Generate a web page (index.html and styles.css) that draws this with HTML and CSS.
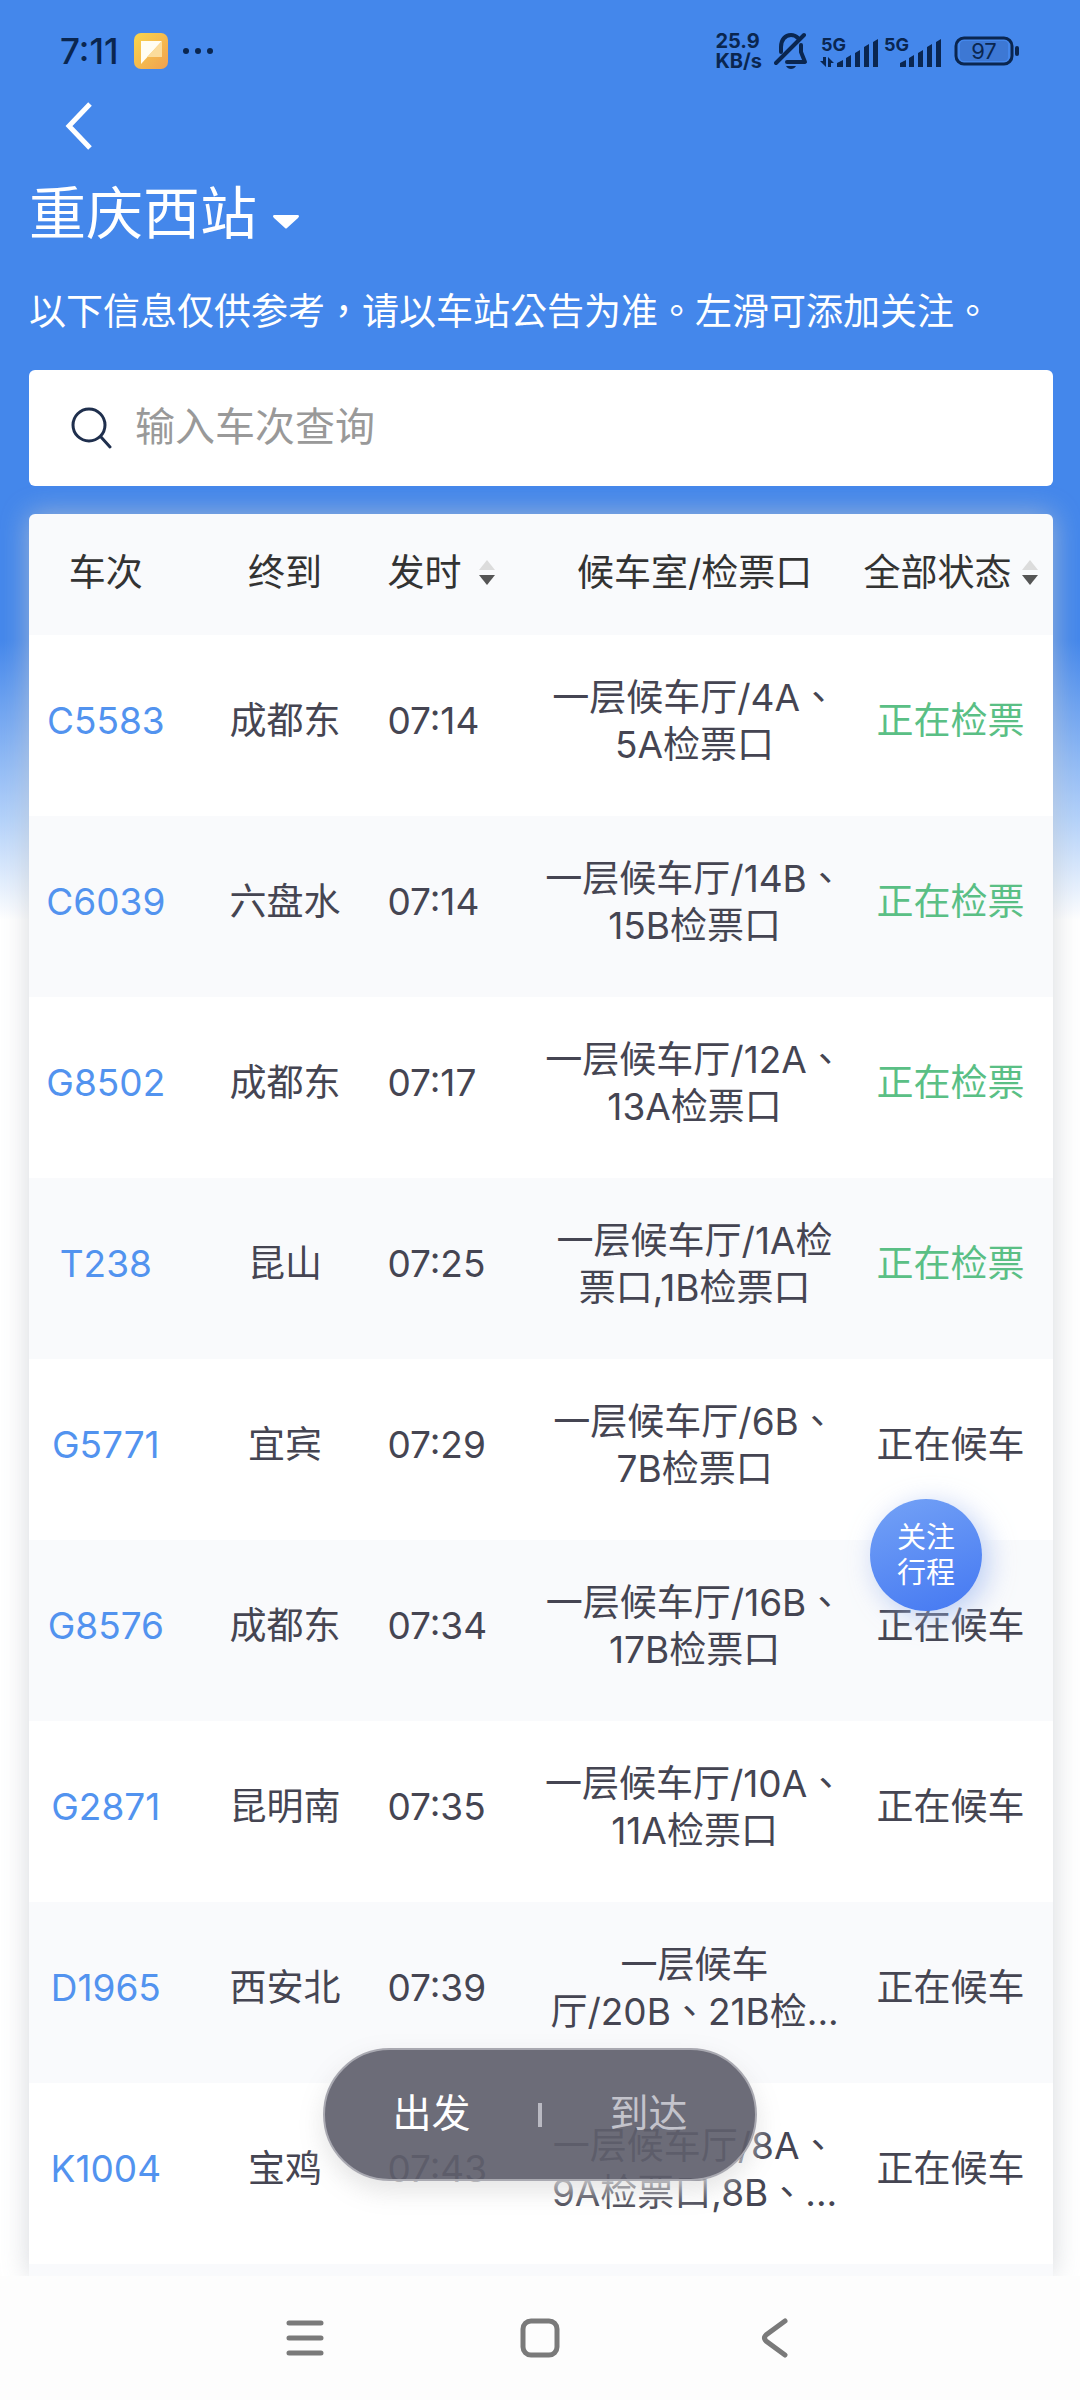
FILE: index.html
```html
<!DOCTYPE html>
<html lang="zh-CN">
<head>
    <meta charset="UTF-8">
    <meta name="viewport" content="width=device-width, initial-scale=1.0">
    <title>重庆西站</title>
    <link rel="stylesheet" href="styles.css">
</head>
<body>
    <div class="screen">
        <div class="status-bar">
            <span class="clock">7:11</span>
            <svg class="app-icon" width="34" height="36" viewBox="0 0 34 36">
                <defs>
                    <linearGradient id="appBg" x1="0" y1="0" x2="1" y2="1">
                        <stop offset="0" stop-color="#f9d64c"/>
                        <stop offset="1" stop-color="#f0a050"/>
                    </linearGradient>
                </defs>
                <rect width="34" height="36" rx="7" fill="url(#appBg)"/>
                <path d="M7 8h21L7 31z" fill="#fffdf2"/>
                <path d="M28 8v16H13z" fill="#fbdc9b"/>
            </svg>
            <svg class="more-icon" width="32" height="8" viewBox="0 0 32 8" fill="#0a2650">
                <circle cx="4" cy="4" r="3"/>
                <circle cx="16" cy="4" r="3"/>
                <circle cx="28" cy="4" r="3"/>
            </svg>
            <div class="status-right">
                <span class="net-speed">25.9<br>KB/s</span>
                <svg width="34" height="38" viewBox="0 0 34 38" fill="none" stroke="#0a2650" stroke-width="4" stroke-linecap="round" stroke-linejoin="round">
                    <path d="M2 31L30 3"/>
                    <path d="M7 20v-5C7 8 11 3 17 3c3 0 5 1 7 3"/>
                    <path d="M27 13v7l4 10H13"/>
                    <path d="M12 34h10c-1 2-3 3-5 3s-4-1-5-3z" fill="#0a2650" stroke="none"/>
                </svg>
                <svg class="signal" width="122" height="44" viewBox="0 -4 122 44" fill="#0a2650">
                    <text x="1" y="18" class="signal-text">5G</text>
                    <path d="M0 28h3v-4h3v10zM8 34V24l6 6h-3v4z"/>
                    <path d="M17 34v-4l6-3v7zM26 34V25l5-3v12zM35 34V20l5-3v17zM44 34V14l5-3v23zM53 34V9l5-3v28z"/>
                    <text x="64" y="18" class="signal-text">5G</text>
                    <path d="M80 34v-4l6-3v7zM89 34V25l5-3v12zM98 34V20l5-3v17zM107 34V14l5-3v23zM116 34V9l5-3v28z"/>
                </svg>
                <svg class="battery" width="66" height="30" viewBox="0 0 66 30">
                    <rect x="2" y="2" width="56" height="26" rx="8" fill="none" stroke="#0a2650" stroke-width="3"/>
                    <rect x="6" y="5" width="48" height="20" rx="4" fill="#3d78d4"/>
                    <rect x="61" y="10" width="4" height="10" rx="2" fill="#0a2650"/>
                    <text x="30" y="23" text-anchor="middle" class="battery-text">97</text>
                </svg>
            </div>
        </div>

        <header class="page-head">
            <button class="back-btn" aria-label="返回">
                <svg width="28" height="48" viewBox="0 0 28 48" fill="none" stroke="#fff" stroke-width="5">
                    <path d="M25 2L4 24l21 22"/>
                </svg>
            </button>
            <button class="station-btn">
                重庆西站
                <svg width="26" height="14" viewBox="0 0 26 14" fill="#fff">
                    <path d="M1 0h24q2 1 0 3L14 13q-1 1-2 0L1 3Q-1 1 1 0z"/>
                </svg>
            </button>
            <p class="notice" lang="zh-TW">以下信息仅供参考，请以车站公告为准。左滑可添加关注。</p>
            <label class="search-box">
                <svg width="42" height="42" viewBox="0 0 42 42" fill="none" stroke="#1f2f4d" stroke-width="3" stroke-linecap="round">
                    <circle cx="18" cy="18" r="16"/>
                    <path d="M30 30l9 10"/>
                </svg>
                <input type="text" placeholder="输入车次查询" aria-label="输入车次查询">
            </label>
        </header>

        <main class="board">
            <table class="train-table">
                <thead>
                    <tr>
                        <th class="col-train">车次</th>
                        <th class="col-dest">终到</th>
                        <th class="col-time">
                            <button class="sort-btn sort-time">发时
                                <svg width="16" height="26" viewBox="0 0 16 26"><path d="M8 0l8 10H0z" fill="#dcdcdc"/><path d="M0 15h16L8 25z" fill="#555"/></svg>
                            </button>
                        </th>
                        <th class="col-hall">候车室/检票口</th>
                        <th class="col-state">
                            <button class="sort-btn">全部状态
                                <svg width="16" height="26" viewBox="0 0 16 26"><path d="M8 0l8 10H0z" fill="#dcdcdc"/><path d="M0 15h16L8 25z" fill="#555"/></svg>
                            </button>
                        </th>
                    </tr>
                </thead>
                <tbody>
                    <tr>
                        <td><a href="#">C5583</a></td>
                        <td>成都东</td>
                        <td class="time">07:14</td>
                        <td class="hall">一层候车厅/4A、<br>5A检票口</td>
                        <td class="checking">正在检票</td>
                    </tr>
                    <tr>
                        <td><a href="#">C6039</a></td>
                        <td>六盘水</td>
                        <td class="time">07:14</td>
                        <td class="hall">一层候车厅/14B、<br>15B检票口</td>
                        <td class="checking">正在检票</td>
                    </tr>
                    <tr>
                        <td><a href="#">G8502</a></td>
                        <td>成都东</td>
                        <td class="time">07:17</td>
                        <td class="hall">一层候车厅/12A、<br>13A检票口</td>
                        <td class="checking">正在检票</td>
                    </tr>
                    <tr>
                        <td><a href="#">T238</a></td>
                        <td>昆山</td>
                        <td class="time">07:25</td>
                        <td class="hall">一层候车厅/1A检<br>票口,1B检票口</td>
                        <td class="checking">正在检票</td>
                    </tr>
                    <tr>
                        <td><a href="#">G5771</a></td>
                        <td>宜宾</td>
                        <td class="time">07:29</td>
                        <td class="hall">一层候车厅/6B、<br>7B检票口</td>
                        <td>正在候车</td>
                    </tr>
                    <tr>
                        <td><a href="#">G8576</a></td>
                        <td>成都东</td>
                        <td class="time">07:34</td>
                        <td class="hall">一层候车厅/16B、<br>17B检票口</td>
                        <td>正在候车</td>
                    </tr>
                    <tr>
                        <td><a href="#">G2871</a></td>
                        <td>昆明南</td>
                        <td class="time">07:35</td>
                        <td class="hall">一层候车厅/10A、<br>11A检票口</td>
                        <td>正在候车</td>
                    </tr>
                    <tr>
                        <td><a href="#">D1965</a></td>
                        <td>西安北</td>
                        <td class="time">07:39</td>
                        <td class="hall">一层候车<br>厅/20B、21B检...</td>
                        <td>正在候车</td>
                    </tr>
                    <tr>
                        <td><a href="#">K1004</a></td>
                        <td>宝鸡</td>
                        <td class="time">07:43</td>
                        <td class="hall">一层候车厅/8A、<br>9A检票口,8B、...</td>
                        <td>正在候车</td>
                    </tr>
                </tbody>
            </table>
        </main>

        <button class="follow-btn">关注<br>行程</button>

        <div class="switch">
            <button class="switch-item active">出发</button>
            <span class="switch-line"></span>
            <button class="switch-item">到达</button>
        </div>

        <nav class="nav-bar">
            <button aria-label="菜单">
                <svg width="40" height="40" viewBox="0 0 40 40" stroke="#7a7a7a" stroke-width="5" stroke-linecap="round">
                    <path d="M4 5h32M4 20h32M4 35h32"/>
                </svg>
            </button>
            <button aria-label="主页">
                <svg width="40" height="40" viewBox="0 0 40 40" fill="none" stroke="#7a7a7a" stroke-width="5">
                    <rect x="3" y="3" width="34" height="34" rx="8"/>
                </svg>
            </button>
            <button aria-label="后退">
                <svg width="40" height="40" viewBox="0 0 40 40" fill="none" stroke="#7a7a7a" stroke-width="5" stroke-linecap="round">
                    <path d="M30 3L11 17q-3 3 0 6l19 14" />
                </svg>
            </button>
        </nav>
    </div>
</body>
</html>
```
FILE: styles.css
```css
* {
    box-sizing: border-box;
}

body {
    margin: 0;
    font-family: Inter, "Noto Sans CJK SC", sans-serif;
    font-size: 37px;
    color: #454552;
}

button {
    border: none;
    background: none;
    padding: 0;
    font: inherit;
    color: inherit;
}

svg {
    display: block;
    flex: none;
}

.screen {
    position: relative;
    display: flex;
    flex-direction: column;
    height: 100vh;
    overflow: hidden;
    background: linear-gradient(#4487eb 640px, #b4d2fa 820px, #fff 920px);
}

/* phone status bar */
.status-bar {
    display: flex;
    align-items: center;
    height: 102px;
    padding: 0 60px;
    color: #0a2650;
}

.clock {
    font-size: 35px;
    font-weight: 500;
}

.app-icon {
    margin-left: 16px;
}

.more-icon {
    margin-left: 14px;
}

.status-right {
    display: flex;
    align-items: center;
    margin-left: auto;
    gap: 12px;
}

.net-speed {
    font-size: 20px;
    font-weight: 700;
    line-height: 20px;
}

.signal-text {
    font-size: 18px;
    font-weight: 700;
}

.battery-text {
    font-size: 22px;
    fill: #0a2650;
}

/* header */
.page-head {
    padding: 0 27px 0 29px;
    color: #fff;
}

.back-btn {
    display: block;
    margin-left: 36px;
}

.station-btn {
    display: flex;
    align-items: center;
    gap: 16px;
    margin-top: 28px;
    font-size: 57px;
    line-height: 72px;
}

.station-btn svg {
    margin-top: 16px;
}

.notice {
    margin: 32px 0 34px;
    font-family: "Noto Sans CJK TC", sans-serif;
    line-height: 54px;
    white-space: nowrap;
}

.search-box {
    display: flex;
    align-items: center;
    gap: 22px;
    height: 116px;
    padding: 0 42px;
    background: #fff;
    border-radius: 6px;
}

.search-box input {
    flex: 1;
    min-width: 0;
    padding: 0 0 4px;
    border: none;
    outline: none;
    background: none;
    font: inherit;
    font-size: 40px;
}

.search-box input::placeholder {
    color: #999;
}

/* train list */
.board {
    flex: 1;
    min-height: 0;
    margin: 28px 27px 0 29px;
    background: #f9fafc;
    border-radius: 6px 6px 0 0;
    box-shadow: 0 0 28px rgba(195, 200, 205, 0.7);
}

.train-table {
    width: 100%;
    table-layout: fixed;
    border-collapse: collapse;
    text-align: center;
}

.train-table th {
    height: 121px;
    padding: 0 0 10px;
    font-weight: 400;
    color: #333;
    white-space: nowrap;
}

.train-table td {
    height: 181px;
    padding: 0 0 10px;
    line-height: 47px;
    white-space: nowrap;
}

.train-table tbody tr:nth-child(odd) {
    background: #fff;
}

.train-table a {
    color: #5293ef;
    text-decoration: none;
}

.col-train { width: 15%; }
.col-dest { width: 20%; }
.col-time { width: 15%; }
.col-hall { width: 30%; }
.col-state { width: 20%; }

.train-table .time {
    text-align: left;
}

.train-table .hall {
    font-family: Inter, "Noto Sans CJK TC", sans-serif;
}

.train-table .checking {
    color: #5abf85;
}

.sort-btn {
    display: flex;
    align-items: center;
    justify-content: center;
    gap: 10px;
    width: 100%;
}

.sort-time {
    justify-content: flex-start;
    gap: 18px;
}

.sort-btn svg {
    margin-top: 6px;
}

/* floating controls */
.follow-btn {
    position: absolute;
    right: 98px;
    bottom: 789px;
    width: 112px;
    height: 112px;
    border-radius: 50%;
    background: linear-gradient(160deg, #74a2f6, #4478f2);
    box-shadow: 6px 6px 28px rgba(160, 185, 240, 0.7);
    color: #fff;
    font-size: 29px;
    line-height: 35px;
}

.switch {
    position: absolute;
    left: 50%;
    bottom: 219px;
    transform: translateX(-50%);
    display: flex;
    align-items: center;
    width: 434px;
    height: 133px;
    border: 2px solid #a9a9b1;
    border-radius: 67px;
    background: rgba(96, 96, 109, 0.92);
    box-shadow: 0 10px 24px rgba(225, 225, 225, 0.9);
}

.switch-item {
    flex: 1;
    height: 100%;
    padding-bottom: 10px;
    font-size: 39px;
    color: #c3c3cb;
}

.switch-item.active {
    color: #fff;
}

.switch-line {
    width: 4px;
    height: 24px;
    background: #b9b9c2;
}

.nav-bar {
    position: relative;
    display: grid;
    grid-template-columns: repeat(3, 1fr);
    height: 124px;
    padding: 0 188px;
    background: #fdfdfd;
}

.nav-bar button {
    display: flex;
    align-items: center;
    justify-content: center;
}
```
